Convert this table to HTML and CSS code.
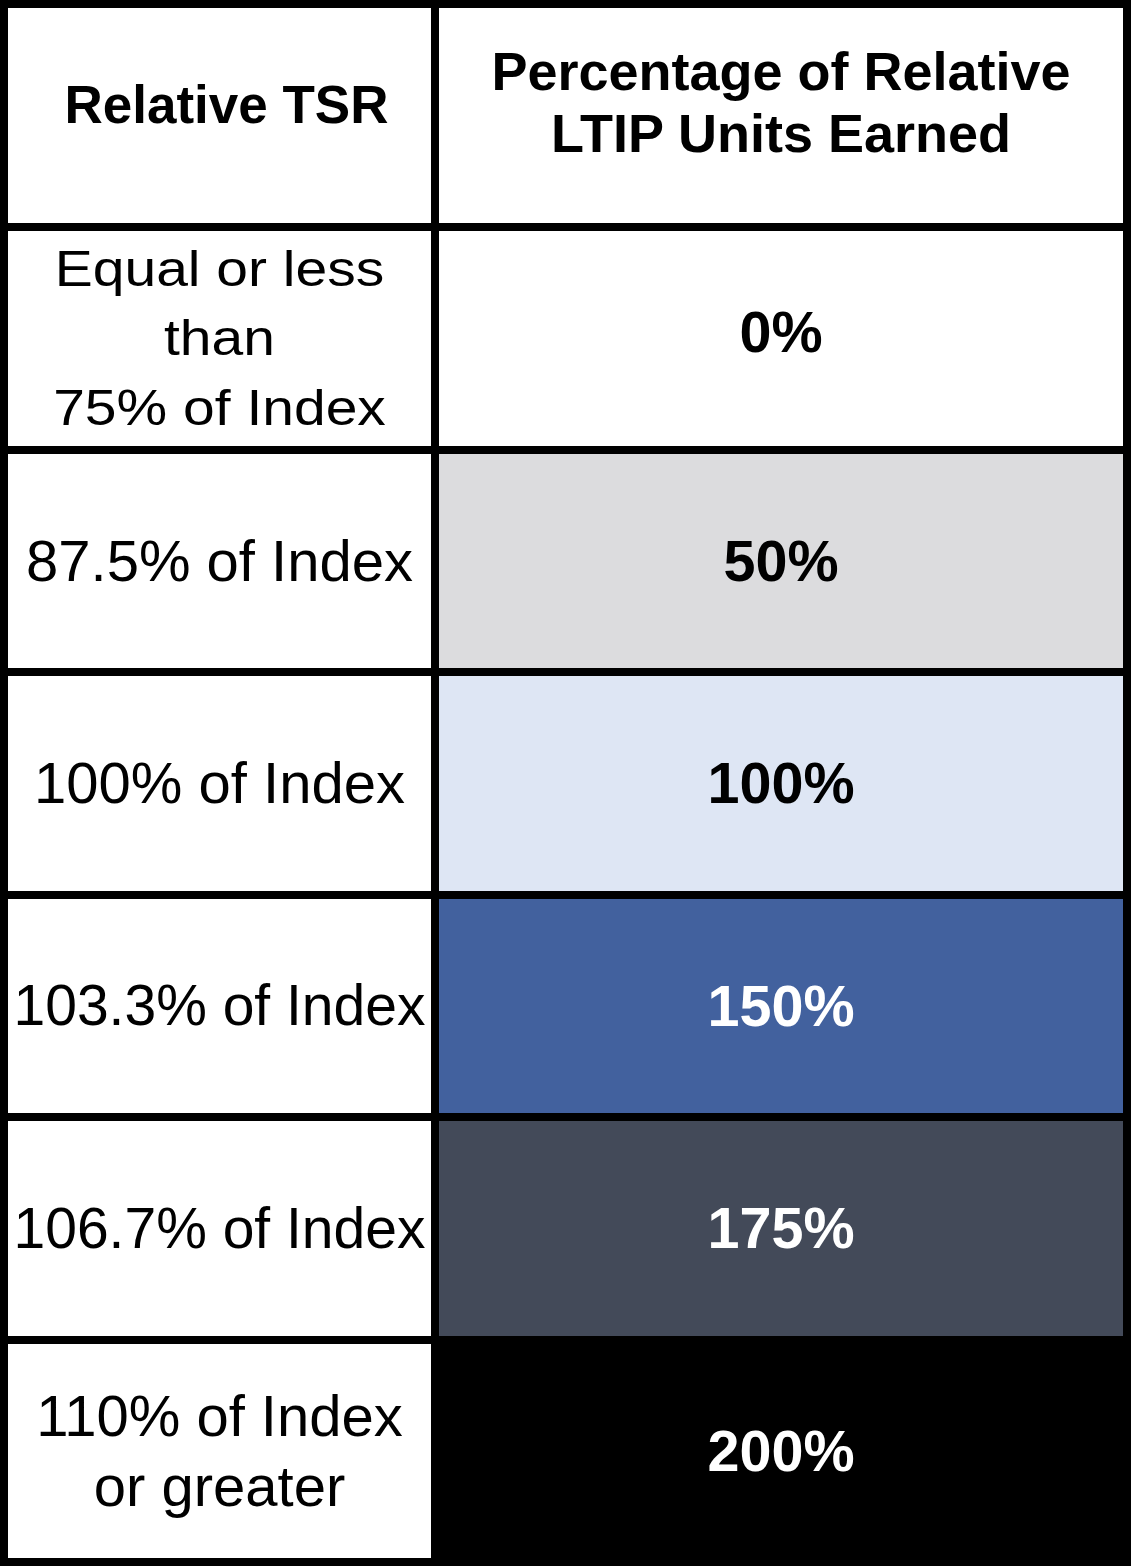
FILE: index.html
```html
<!DOCTYPE html>
<html lang="en">
<head>
<meta charset="utf-8">
<title>Relative TSR</title>
<link rel="stylesheet" href="styles.css">
</head>
<body>
<div class="tsr-table">
  <div class="cell head head-left"><span class="txt-head">Relative TSR</span></div>
  <div class="cell head head-right">
    <div class="head-lines">
      <span class="hline">Percentage of Relative</span>
      <span class="hline">LTIP Units Earned</span>
    </div>
  </div>

  <div class="cell label"><span class="txt-squeeze">Equal or less<br>than<br>75% of Index</span></div>
  <div class="cell value v-white first-value"><span class="num">0%</span></div>

  <div class="cell label"><span class="txt">87.5% of Index</span></div>
  <div class="cell value v-gray"><span class="num">50%</span></div>

  <div class="cell label"><span class="txt">100% of Index</span></div>
  <div class="cell value v-light"><span class="num">100%</span></div>

  <div class="cell label"><span class="txt txt-long">103.3% of Index</span></div>
  <div class="cell value v-blue"><span class="num">150%</span></div>

  <div class="cell label"><span class="txt txt-long">106.7% of Index</span></div>
  <div class="cell value v-slate"><span class="num">175%</span></div>

  <div class="cell label"><span class="txt-two">110% of Index<br>or greater</span></div>
  <div class="cell value v-black"><span class="num">200%</span></div>
</div>
</body>
</html>
```

FILE: styles.css
```css
html, body {
  margin: 0;
  padding: 0;
  background: #ffffff;
}

body {
  font-family: "Liberation Sans", Arial, Helvetica, sans-serif;
  color: #000000;
}

.tsr-table {
  display: grid;
  grid-template-columns: 423px 684px;
  grid-template-rows: 215px 215px 214px 215px 214px 215px 214px;
  gap: 8px;
  padding: 8px;
  width: 1131px;
  box-sizing: border-box;
  background: #000000;
}

.cell {
  display: flex;
  align-items: center;
  justify-content: center;
  text-align: center;
  background: #ffffff;
  overflow: hidden;
  box-sizing: border-box;
}

.head-left {
  padding-bottom: 20px;
  padding-left: 14px;
}

.head-right {
  padding-bottom: 28px;
}

.txt-head {
  font-size: 53px;
  font-weight: 700;
  line-height: 1.15;
}

.head-lines {
  display: flex;
  flex-direction: column;
  align-items: center;
}

.hline {
  display: block;
  font-size: 54px;
  font-weight: 700;
  line-height: 62px;
  white-space: nowrap;
}

.txt {
  font-size: 58px;
  line-height: 1.15;
  white-space: nowrap;
}

.txt-long {
  font-size: 57px;
}

.txt-squeeze {
  display: block;
  font-size: 57px;
  line-height: 81px;
  transform: scaleY(0.86);
}

.txt-two {
  display: block;
  font-size: 58px;
  line-height: 70px;
  white-space: nowrap;
}

.first-value {
  padding-bottom: 12px;
}

.num {
  font-size: 57.5px;
  font-weight: 700;
  line-height: 1.15;
}

.v-white { background: #ffffff; color: #000000; }
.v-gray  { background: #dcdcde; color: #000000; }
.v-light { background: #dee6f4; color: #000000; }
.v-blue  { background: #42619e; color: #ffffff; }
.v-slate { background: #434a59; color: #ffffff; }
.v-black { background: #000000; color: #ffffff; }
```
